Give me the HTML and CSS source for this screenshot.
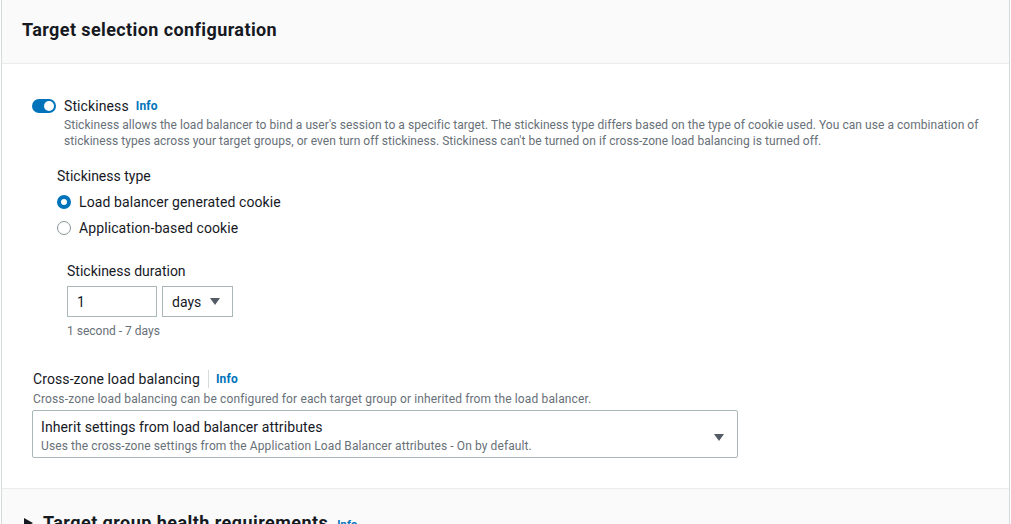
FILE: index.html
```html
<!DOCTYPE html>
<html>
<head>
<meta charset="utf-8">
<link rel="stylesheet" href="styles.css">
</head>
<body>
<div class="panel">
  <div class="panel-header">
    <h2 class="title">Target selection configuration</h2>
  </div>
  <div class="panel-body">
    <div class="toggle-row">
      <span class="toggle"><span class="knob"></span></span>
      <div class="toggle-text">
        <div class="label-line"><span class="label">Stickiness</span><span class="info">Info</span></div>
        <p class="desc">Stickiness allows the load balancer to bind a user's session to a specific target. The stickiness type differs based on the type of cookie used. You can use a combination of stickiness types across your target groups, or even turn off stickiness. Stickiness can't be turned on if cross-zone load balancing is turned off.</p>
      </div>
    </div>

    <div class="sticky-type">
      <div class="field-label">Stickiness type</div>
      <div class="radio-row"><span class="radio checked"></span><span>Load balancer generated cookie</span></div>
      <div class="radio-row"><span class="radio"></span><span>Application-based cookie</span></div>
    </div>

    <div class="duration">
      <div class="field-label">Stickiness duration</div>
      <div class="duration-inputs">
        <div class="input">1</div>
        <div class="select-small"><span>days</span><svg class="caret" width="10" height="7" viewBox="0 0 10 7"><path d="M0 0h10L5 7z" fill="#545b64"/></svg></div>
      </div>
      <div class="hint">1 second - 7 days</div>
    </div>

    <div class="crosszone">
      <div class="label-line"><span class="label">Cross-zone load balancing</span><span class="sep"></span><span class="info">Info</span></div>
      <div class="desc cz-desc">Cross-zone load balancing can be configured for each target group or inherited from the load balancer.</div>
      <div class="select-big">
        <div>
          <div class="opt-main">Inherit settings from load balancer attributes</div>
          <div class="opt-sub">Uses the cross-zone settings from the Application Load Balancer attributes - On by default.</div>
        </div>
        <svg class="caret" width="10" height="7" viewBox="0 0 10 7"><path d="M0 0h10L5 7z" fill="#545b64"/></svg>
      </div>
    </div>
  </div>
  <div class="collapsed">
    <svg class="expander" width="9" height="10" viewBox="0 0 9 10"><path d="M0 0L9 5L0 10z" fill="#16191f"/></svg>
    <span class="title">Target group health requirements</span>
    <span class="info small">Info</span>
  </div>
</div>
</body>
</html>
```

FILE: styles.css
```css
* { box-sizing: border-box; }
html, body { margin: 0; padding: 0; background: #fff; overflow: hidden; }
body {
  font-family: Roboto, "Liberation Sans", sans-serif;
  color: #16191f;
  font-size: 14px;
  line-height: 20px;
}
.panel {
  margin-left: 1px;
  width: 1009px;
  height: 524px;
  border-left: 1px solid #d5dbdb;
  border-right: 1px solid #d5dbdb;
}
.panel-header {
  background: #fafafa;
  height: 64px;
  border-bottom: 1px solid #eaeded;
  display: flex;
  align-items: center;
  padding: 0 20px 3px 20px;
}
.title {
  margin: 0;
  font-size: 18px;
  font-weight: 700;
  line-height: 24px;
  letter-spacing: 0.4px;
  color: #16191f;
}
.panel-body {
  padding: 31px 30px 30px 30px;
}
.toggle-row {
  display: flex;
  gap: 8px;
}
.toggle {
  width: 24px;
  height: 14px;
  margin-top: 4px;
  border-radius: 7px;
  background: #0073bb;
  position: relative;
  flex: none;
}
.knob {
  position: absolute;
  right: 2px;
  top: 2px;
  width: 10px;
  height: 10px;
  border-radius: 50%;
  background: #fff;
}
.label-line {
  display: flex;
  align-items: center;
}
.label { font-size: 14px; line-height: 22px; letter-spacing: 0.1px; }
.info {
  color: #0073bb;
  font-weight: 700;
  font-size: 12px;
  margin-left: 7px;
  letter-spacing: 0.2px;
}
.desc {
  margin: 0;
  font-size: 12px;
  line-height: 16px;
  color: #687078;
  letter-spacing: 0.05px;
}
.cz-desc { margin-top: 1px; letter-spacing: 0.14px; }
.sticky-type {
  margin-top: 16px;
  padding-left: 25px;
}
.sticky-type .field-label { margin-bottom: 2px; }
.field-label { font-size: 14px; line-height: 22px; }
.radio-row {
  display: flex;
  align-items: center;
  gap: 8px;
  height: 26px;
  letter-spacing: 0.1px;
}
.radio {
  width: 14px;
  height: 14px;
  border-radius: 50%;
  border: 1px solid #879596;
  flex: none;
}
.radio.checked { border: 4px solid #0073bb; }
.duration {
  margin-top: 19px;
  padding-left: 35px;
}
.duration .field-label { margin-bottom: 4px; }
.duration-inputs { display: flex; gap: 5px; }
.input {
  width: 90px;
  height: 31px;
  border: 1px solid #aab7b8;
  padding: 1px 9px 0 9px;
  line-height: 29px;
}
.select-small {
  width: 71px;
  height: 31px;
  border: 1px solid #aab7b8;
  padding: 0 12px 0 9px;
  display: flex;
  align-items: center;
  justify-content: space-between;
}
.hint {
  margin-top: 4px;
  font-size: 12px;
  line-height: 20px;
  color: #687078;
}
.crosszone {
  margin-top: 27px;
  padding-left: 1px;
}
.sep {
  width: 1px;
  height: 18px;
  background: #d5dbdb;
  margin-left: 8px;
}
.select-big {
  margin-top: 3px;
  margin-left: -1px;
  width: 706px;
  height: 48px;
  border: 1px solid #aab7b8;
  border-radius: 2px;
  padding: 6px 13px 0 8px;
  display: flex;
  justify-content: space-between;
  align-items: center;
}
.select-big > div { align-self: flex-start; }
.opt-main { font-size: 14px; line-height: 20px; letter-spacing: 0.1px; }
.opt-sub { font-size: 12px; line-height: 16px; margin-top: 1px; color: #687078; letter-spacing: 0.1px; }
.collapsed {
  border-top: 1px solid #eaeded;
  background: #fafafa;
  height: 60px;
  display: flex;
  align-items: center;
  padding: 8px 0 0 22px;
}
.expander { margin-right: 10px; }
.collapsed .title { letter-spacing: 0.45px; }
.info.small { margin-left: 9px; margin-top: 4px; font-size: 11px; }
```
